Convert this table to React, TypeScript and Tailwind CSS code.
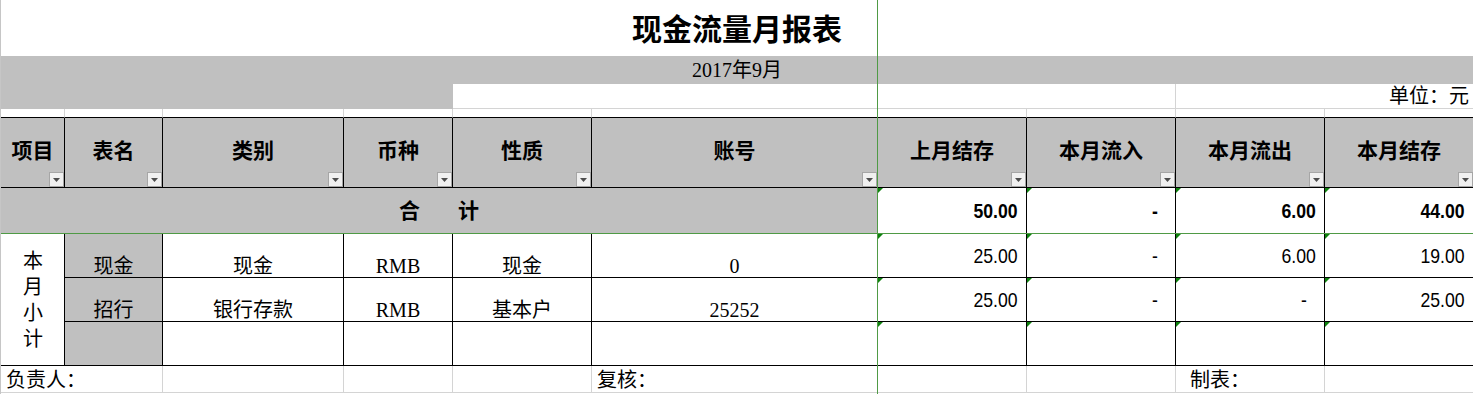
import React from "react";

const SERIF = "font-['Liberation_Serif','Noto_Sans_CJK_SC',serif]";
const NUM = "font-['Liberation_Sans',sans-serif]";

const HEADERS = ["项目", "表名", "类别", "币种", "性质", "账号", "上月结存", "本月流入", "本月流出", "本月结存"];

const ROWS = [
  { text: ["现金", "现金", "RMB", "现金", "0"], nums: ["25.00", "-", "6.00", "19.00"] },
  { text: ["招行", "银行存款", "RMB", "基本户", "25252"], nums: ["25.00", "-", "-", "25.00"] },
  { text: ["", "", "", "", ""], nums: ["", "", "", ""] },
];

function Drop() {
  return (
    <span className="absolute right-0 bottom-0 flex h-[15px] w-[15px] items-center justify-center border border-[#a6a6a6] bg-[#f0f0f0]">
      <svg width="7" height="4" viewBox="0 0 7 4">
        <path d="M0 0h7L3.5 4z" fill="#4d4d4d" />
      </svg>
    </span>
  );
}

function Flag() {
  return <span className="absolute left-0 top-0 h-0 w-0 border-t-[5px] border-r-[5px] border-t-[#0e820e] border-r-transparent" />;
}

function NumCell({ value, bold, last }: { value: string; bold?: boolean; last?: boolean }) {
  return (
    <div
      className={`relative flex items-center justify-end border-b border-black text-[21px] leading-none ${NUM} ${bold ? "font-bold" : ""} ${
        last ? "" : "border-r"
      } ${value === "-" ? "pr-[17px]" : "pr-[8px]"}`}>
      <Flag />
      <span className="inline-block origin-right scale-x-[0.84]">{value}</span>
    </div>
  );
}

export default function App() {
  return (
    <div className={`relative h-[394px] w-[1473px] overflow-hidden border-l border-[#c6c6c6] bg-white text-black ${SERIF}`}>
      <div className="grid grid-cols-[64px_98px_181px_109px_139px_286px_149px_149px_149px_148px] grid-rows-[56px_28px_25px_9px_70px_46px_44px_44px_44px_27px]">
        {/* title */}
        <div className="col-span-10 flex items-center justify-center pt-[4px] text-[30px] font-bold leading-none">
          现金流量月报表
        </div>

        {/* period */}
        <div className="col-span-10 flex items-center justify-center bg-[#c0c0c0] text-[20px] leading-none">
          2017年9月
        </div>

        {/* unit row */}
        <div className="col-span-4 bg-[#c0c0c0]" />
        <div className="col-span-4 border-r border-b border-[#d4d4d4]" />
        <div className="col-span-2 flex items-center justify-end border-b border-[#d4d4d4] pr-[4px] text-[20px] leading-none">
          单位：元
        </div>

        {/* spacer row */}
        {HEADERS.map((h, i) =>
        <div key={h} className={`border-b border-b-black ${i < 9 ? "border-r border-r-[#d4d4d4]" : ""}`} />
        )}

        {/* header */}
        {HEADERS.map((h, i) =>
        <div
          key={h}
          className={`relative flex items-center justify-center border-b border-black bg-[#c0c0c0] pb-[2px] text-[21px] font-bold leading-none ${
            i < 9 ? "border-r" : ""
          }`}>
            {h}
            <Drop />
          </div>
        )}

        {/* total */}
        <div className="col-span-6 flex items-center justify-center gap-[38px] border-r border-b border-black bg-[#c0c0c0] pt-[2px] text-[21px] font-bold leading-none">
          <span>合</span>
          <span>计</span>
        </div>
        {["50.00", "-", "6.00", "44.00"].map((v, i) =>
        <NumCell key={i} value={v} bold last={i === 3} />
        )}

        {/* subtotal block */}
        <div className="row-span-3 flex flex-col items-center justify-center border-r border-b border-black pl-[1px] text-[20px] leading-[26px]">
          {["本", "月", "小", "计"].map((c) =>
          <span key={c}>{c}</span>
          )}
        </div>
        {ROWS.map((r, ri) =>
        <React.Fragment key={ri}>
            {r.text.map((t, ti) =>
          <div
            key={ti}
            className={`flex items-end justify-center border-r border-b border-black pb-[1px] text-[20px] leading-none ${
              ti === 0 ? "bg-[#c0c0c0]" : ""
            }`}>
                {t}
              </div>
          )}
            {r.nums.map((v, ni) =>
          <NumCell key={ni} value={v} last={ni === 3} />
          )}
          </React.Fragment>
        )}

        {/* signatures */}
        <div className="col-span-2 flex items-center border-r border-b border-[#d4d4d4] pl-[5px] pt-[2px] text-[20px] leading-none">
          负责人：
        </div>
        <div className="border-r border-b border-[#d4d4d4]" />
        <div className="border-r border-b border-[#d4d4d4]" />
        <div className="border-r border-b border-[#d4d4d4]" />
        <div className="flex items-center border-r border-b border-[#d4d4d4] pl-[5px] pt-[2px] text-[20px] leading-none">
          复核：
        </div>
        <div className="border-r border-b border-[#d4d4d4]" />
        <div className="border-r border-b border-[#d4d4d4]" />
        <div className="flex items-center border-r border-b border-[#d4d4d4] pl-[14px] pt-[2px] text-[20px] leading-none">
          制表：
        </div>
        <div className="border-b border-[#d4d4d4]" />
      </div>

      {/* frozen pane lines */}
      <div className="pointer-events-none absolute top-0 bottom-0 left-[876px] w-px bg-[#4f9a45]" />
      <div className="pointer-events-none absolute left-0 right-0 top-[233px] h-px bg-[#4f9a45]" />
    </div>);

}
